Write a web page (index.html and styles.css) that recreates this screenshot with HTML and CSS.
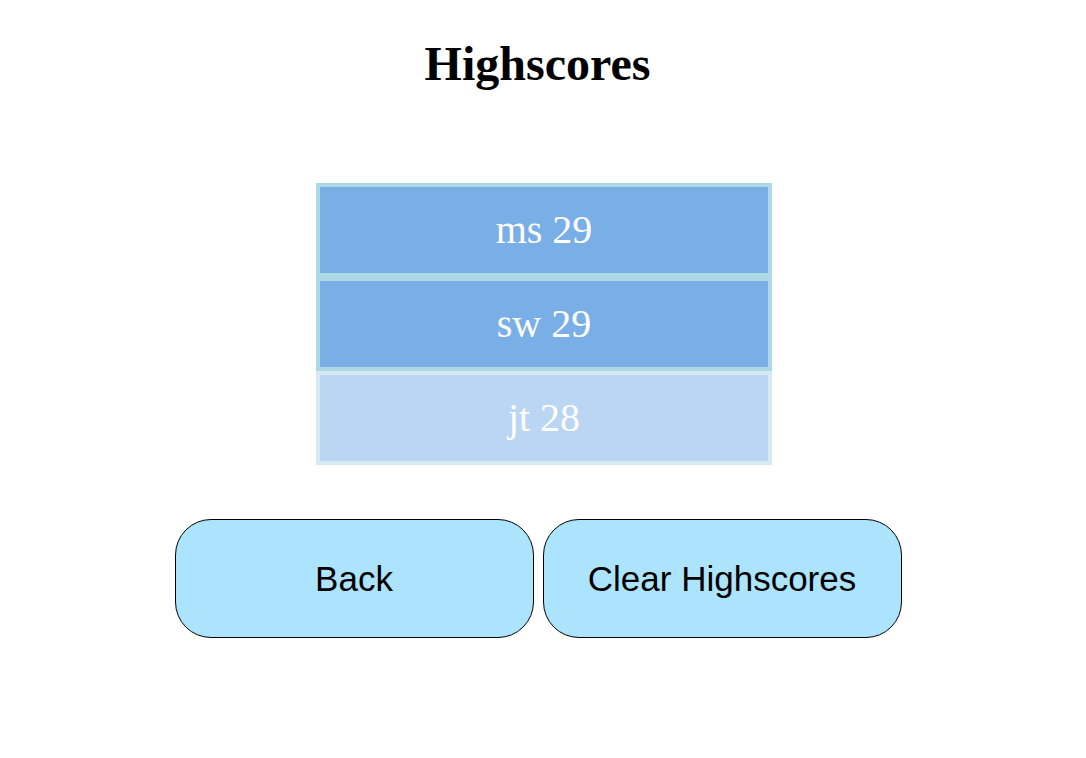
FILE: index.html
```html
<!DOCTYPE html>
<html>
<head>
<meta charset="utf-8">
<title>Highscores</title>
<link rel="stylesheet" href="styles.css">
</head>
<body>
<main class="page">
  <h1 class="title">Highscores</h1>
  <ul class="scores">
    <li class="score">ms 29</li>
    <li class="score">sw 29</li>
    <li class="score score-faded">jt 28</li>
  </ul>
  <div class="actions">
    <button class="btn">Back</button>
    <button class="btn">Clear Highscores</button>
  </div>
</main>
</body>
</html>
```

FILE: styles.css
```css
html, body {
  margin: 0;
  padding: 0;
  background: #ffffff;
}

.page {
  display: flex;
  flex-direction: column;
  align-items: center;
  font-family: "Liberation Serif", "Times New Roman", serif;
}

.title {
  margin: 36px 11px 0 0;
  font-size: 48px;
  line-height: 55px;
  font-weight: bold;
  color: #000;
}

.scores {
  list-style: none;
  margin: 92px 0 0 2px;
  padding: 0;
  width: 456px;
}

.score {
  box-sizing: border-box;
  background: #7aaee6;
  border: 4px solid #add8e6;
  color: #ffffff;
  font-size: 40px;
  line-height: 46px;
  padding: 20px 0;
  text-align: center;
}

.score-faded {
  opacity: 0.5;
}

.actions {
  display: flex;
  gap: 9px;
  margin: 54px 10px 0 0;
}

.btn {
  box-sizing: border-box;
  width: 359px;
  height: 119px;
  border: 1.5px solid #000;
  border-radius: 36px;
  background: #ade4fd;
  color: #000;
  font-family: "Liberation Sans", Arial, sans-serif;
  font-size: 35px;
  padding: 0;
}
```
